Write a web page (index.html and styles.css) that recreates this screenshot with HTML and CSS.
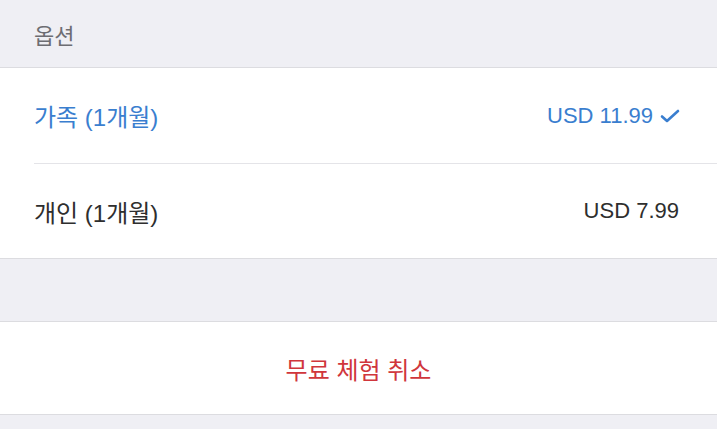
FILE: index.html
```html
<!DOCTYPE html>
<html lang="ko">
<head>
    <meta charset="UTF-8">
    <meta name="viewport" content="width=device-width, initial-scale=1.0">
    <title>옵션</title>
    <link rel="stylesheet" href="styles.css">
</head>
<body>
    <div class="section-header">옵션</div>

    <div class="group">
        <div class="row selected">
            <span class="label">가족 (1개월)</span>
            <span class="price">USD 11.99
                <svg class="check" width="20" height="14" viewBox="0 0 20 14">
                    <path d="M2 7.5 L7 12 L18 2" fill="none" stroke="currentColor" stroke-width="2.6" stroke-linecap="round" stroke-linejoin="round"/>
                </svg>
            </span>
        </div>
        <div class="row">
            <span class="label">개인 (1개월)</span>
            <span class="price">USD 7.99</span>
        </div>
    </div>

    <div class="spacer"></div>

    <div class="group">
        <button class="cancel">무료 체험 취소</button>
    </div>
</body>
</html>
```

FILE: styles.css
```css
body {
    margin: 0;
    background: #efeff4;
    font-family: "Liberation Sans", "Noto Sans CJK KR", sans-serif;
    color: #2e2e2e;
}
.section-header {
    height: 67px;
    padding-left: 34px;
    display: flex;
    align-items: center;
    font-size: 22px;
    color: #6d6d72;
    border-bottom: 1px solid #dcdce0;
}
.group {
    background: #fff;
    border-bottom: 1px solid #dcdce0;
}
.row {
    height: 95px;
    margin-left: 34px;
    padding-right: 38px;
    display: flex;
    align-items: center;
    justify-content: space-between;
    font-size: 24px;
}
.row + .row {
    height: 94px;
    border-top: 1px solid #e4e4e8;
}
.row.selected {
    color: #3a7ecf;
    padding-right: 37px;
}
.price {
    display: flex;
    align-items: center;
    font-size: 22px;
}
.check {
    margin-left: 7px;
    margin-top: 1px;
}
.spacer {
    height: 62px;
    border-bottom: 1px solid #dcdce0;
}
.cancel {
    display: block;
    width: 100%;
    height: 92px;
    border: none;
    background: #fff;
    color: #d0363c;
    font-family: "Liberation Sans", "Noto Sans CJK KR", sans-serif;
    font-size: 24px;
    padding: 0;
}
```
